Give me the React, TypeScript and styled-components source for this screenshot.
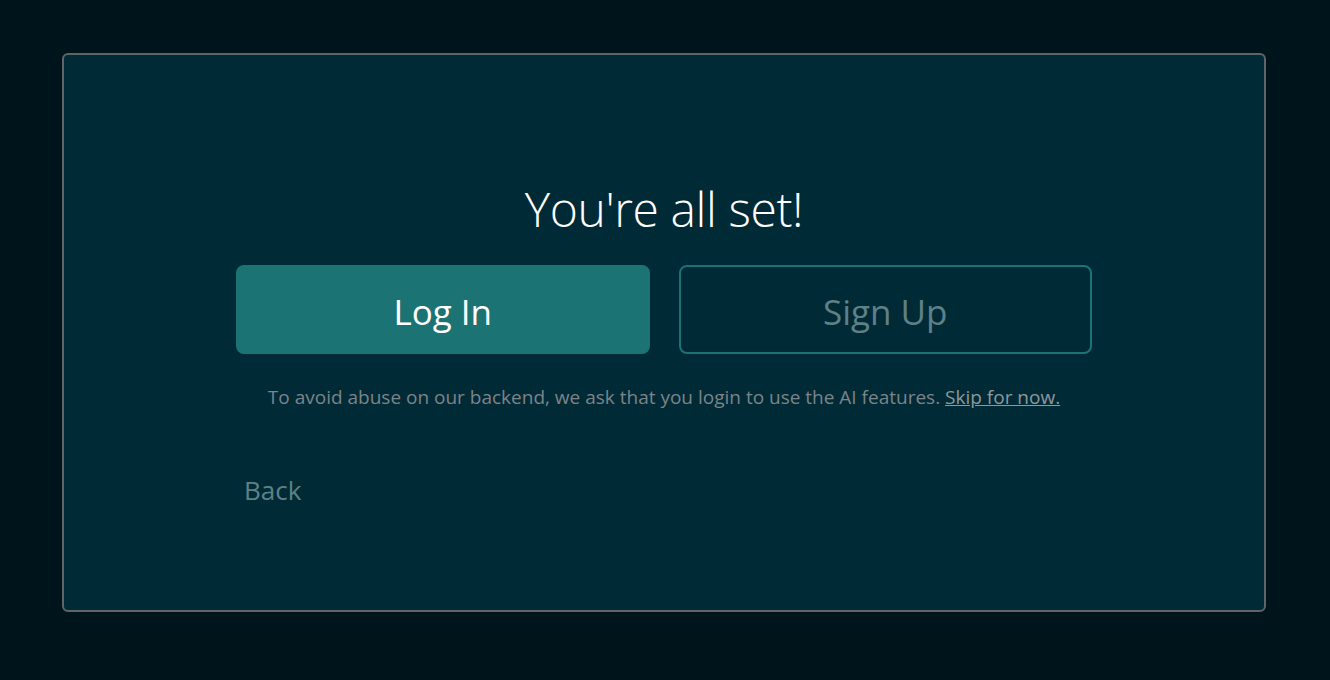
import React from "react";
import styled, { createGlobalStyle } from "styled-components";

const Global = createGlobalStyle`
  html, body { margin: 0; padding: 0; background: #00151b; }
  body { font-family: "Open Sans", "Noto Sans", sans-serif; }
  * { box-sizing: border-box; }
`;

const Page = styled.div`
  width: 1330px;
  height: 680px;
  padding: 53px 64px 68px 62px;
  display: flex;
`;

const Card = styled.div`
  flex: 1;
  background: #012a37;
  border: 2px solid #5f6466;
  border-radius: 6px;
  display: flex;
  flex-direction: column;
  align-items: center;
  padding-top: 118px;
`;

const Inner = styled.div`
  width: 856px;
  display: flex;
  flex-direction: column;
  align-items: stretch;
`;

const Title = styled.h1`
  margin: 0;
  font-weight: 300;
  font-size: 48px;
  line-height: 72px;
  color: #ffffff;
  text-align: center;
  letter-spacing: -0.4px;
`;

const Buttons = styled.div`
  display: grid;
  grid-template-columns: 1fr 1fr;
  gap: 29px;
  margin-top: 20px;
`;

const Btn = styled.button<{ $primary?: boolean }>`
  height: 89px;
  border-radius: 8px;
  font-family: inherit;
  font-size: 35px;
  font-weight: 400;
  padding-top: 4px;
  cursor: pointer;
  background: ${(p) => (p.$primary ? "#1c7373" : "transparent")};
  border: 2px solid ${(p) => (p.$primary ? "#1c7373" : "#1b7374")};
  color: ${(p) => (p.$primary ? "#ffffff" : "#5e8187")};
`;

const Note = styled.p`
  margin: 30px 0 0;
  text-align: center;
  font-size: 19px;
  color: #7b8488;
`;

const Skip = styled.a`
  color: #8e989b;
  text-decoration: underline;
  cursor: pointer;
`;

const Back = styled.button`
  align-self: flex-start;
  margin-top: 62px;
  padding: 0 8px;
  background: none;
  border: none;
  font-family: inherit;
  font-size: 26px;
  color: #5e8187;
  cursor: pointer;
`;

export default function App() {
  return (
    <>
      <Global />
      <Page>
        <Card>
          <Inner>
            <Title>You're all set!</Title>
            <Buttons>
              <Btn $primary>Log In</Btn>
              <Btn>Sign Up</Btn>
            </Buttons>
            <Note>
              To avoid abuse on our backend, we ask that you login to use the AI features.{" "}
              <Skip>Skip for now.</Skip>
            </Note>
            <Back>Back</Back>
          </Inner>
        </Card>
      </Page>
    </>
  );
}
